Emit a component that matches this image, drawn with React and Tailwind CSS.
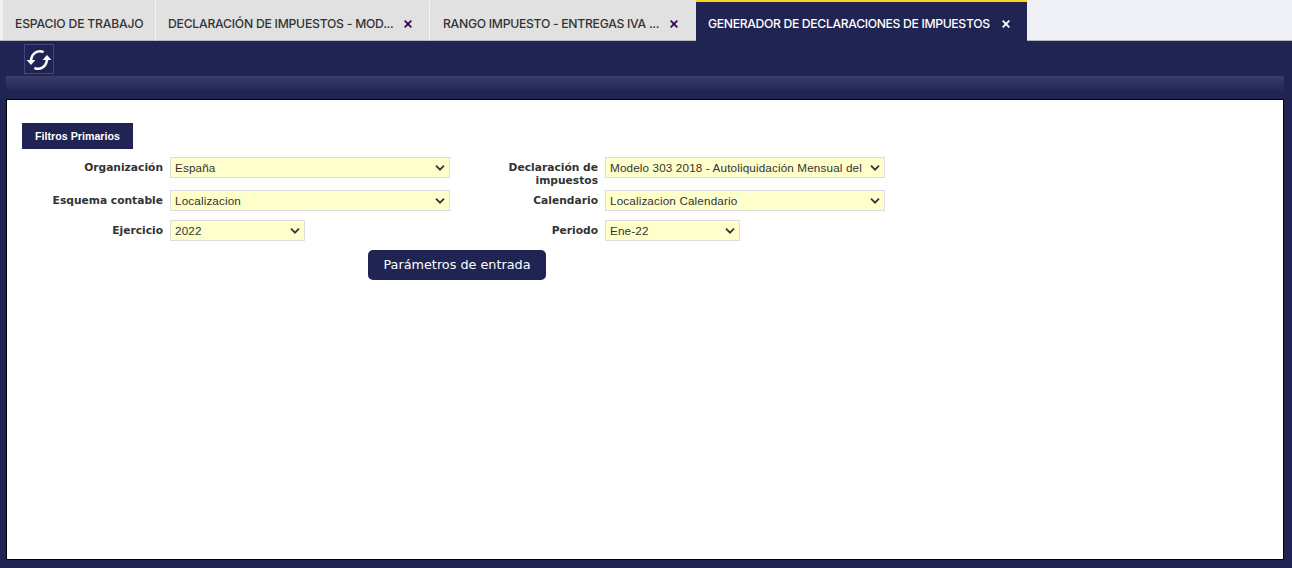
const tabs = [
  { label: 'ESPACIO DE TRABAJO', width: 'w-[153px]', spacing: 'tracking-[-0.2px]' },
  { label: 'DECLARACIÓN DE IMPUESTOS - MOD...', width: 'w-[274px]', spacing: 'tracking-[-0.24px]', closable: true },
  { label: 'RANGO IMPUESTO - ENTREGAS IVA ...', width: 'w-[266px]', spacing: 'tracking-[-0.28px]', closable: true },
  { label: 'GENERADOR DE DECLARACIONES DE IMPUESTOS', width: 'w-[331px]', spacing: 'tracking-[-0.34px]', closable: true, active: true },
];

function Tab({ label, width, spacing, closable, active }) {
  return (
    <div
      className={`flex h-full shrink-0 items-center justify-between border-t-2 border-b pl-3 ${width} ${
        active
          ? 'border-t-[#ffd615] border-b-[#202452] bg-[#202452] pr-[17px] text-white'
          : 'border-t-[#e1e1e1] border-r border-r-[#f4f4f6] border-b-[#b8b8b8] bg-[#e1e1e1] pr-[17px] text-[#333333] nth-4:border-r-0 nth-4:pl-[13px] nth-4:pr-[18px]'
      }`}
    >
      <span className={`pt-[5px] text-[12.2px] leading-[18px] font-medium whitespace-nowrap ${spacing}`}>{label}</span>
      {closable && (
        <svg className={`mt-[6px] h-2 w-2 ${active ? 'text-white' : 'text-[#2e0854]'}`} viewBox="0 0 8 8" fill="none" stroke="currentColor" strokeWidth="1.8">
          <path d="M.7.7l6.6 6.6M7.3.7L.7 7.3" />
        </svg>
      )}
    </div>
  );
}

function Field({ label, value, short }) {
  return (
    <div className="flex">
      <label className="mr-[7px] w-[113px] pt-1 text-right font-['DejaVu_Sans'] text-[10.7px] leading-[13px] font-bold text-[#333333]">{label}</label>
      <div className={`grid h-[21px] ${short ? 'w-[135px]' : 'w-[280px]'}`}>
        <select className="col-start-1 row-start-1 h-[21px] w-full appearance-none border border-[#dddddd] bg-[#ffffcc] pt-px pr-5 pl-1 font-['Liberation_Sans'] text-[11.7px] leading-[18px] tracking-[0.14px] text-[#333333]">
          <option>{value}</option>
        </select>
        <svg
          className="pointer-events-none col-start-1 row-start-1 mt-2 mr-[5px] h-[6px] w-[10px] justify-self-end text-[#333333]"
          viewBox="0 0 10 6"
          fill="none"
          stroke="currentColor"
          strokeWidth="1.7"
        >
          <path d="M1 .7l4 4 4-4" />
        </svg>
      </div>
    </div>
  );
}

export default function App() {
  return (
    <div className="flex h-[568px] w-[1292px] flex-col overflow-hidden bg-[#202452] font-['Inter',sans-serif]">
      <nav className="flex h-[41px] shrink-0 bg-[#eff0f6]">
        <div className="w-[3px] border-b border-[#b8b8b8]" />
        {tabs.map((tab) => (
          <Tab key={tab.label} {...tab} />
        ))}
        <div className="flex-1 border-b border-[#b8b8b8]" />
      </nav>
      <header className="h-[35px] shrink-0 pt-[3px] pl-6">
        <button className="flex h-[30px] w-[30px] items-center justify-center border border-[#40458a]">
          <svg className="mt-[2px] h-[26px] w-[26px]" viewBox="0 0 26 26" fill="none" stroke="white" strokeWidth="2.6">
            <path d="M17.6 5.2C12.2 2.4 5.6 6 5 13.6" />
            <path d="M8.4 20.8C13.8 23.6 20.4 20 21 12.4" />
            <path d="M.6 13h8.8L5 18zM16.6 13h8.8L21 8z" fill="white" stroke="none" />
          </svg>
        </button>
      </header>
      <div className="mx-[6px] mr-2 h-[23px] shrink-0 bg-linear-to-b from-[#393d67] to-[#202452] to-70%" />
      <main className="mr-2 ml-[6px] flex h-[461px] shrink-0 flex-col items-start border border-black bg-white pt-[23px] pl-[15px]">
        <h2 className="flex h-[26px] w-[111px] items-center justify-center bg-[#202452] font-['Liberation_Sans'] text-[10.7px] font-bold text-white">
          Filtros Primarios
        </h2>
        <div className="mt-2 ml-7 grid grid-cols-[435px_400px] grid-rows-[33px_30px_30px]">
          <Field label="Organización" value="España" />
          <Field label="Declaración de impuestos" value="Modelo 303 2018 - Autoliquidación Mensual del" />
          <Field label="Esquema contable" value="Localizacion" />
          <Field label="Calendario" value="Localizacion Calendario" />
          <Field label="Ejercicio" value="2022" short />
          <Field label="Periodo" value="Ene-22" short />
        </div>
        <button className="ml-[346px] h-[30px] w-[178px] rounded-[5px] bg-[#202452] font-['DejaVu_Sans'] text-[12.8px] text-white">
          Parámetros de entrada
        </button>
      </main>
    </div>
  );
}
